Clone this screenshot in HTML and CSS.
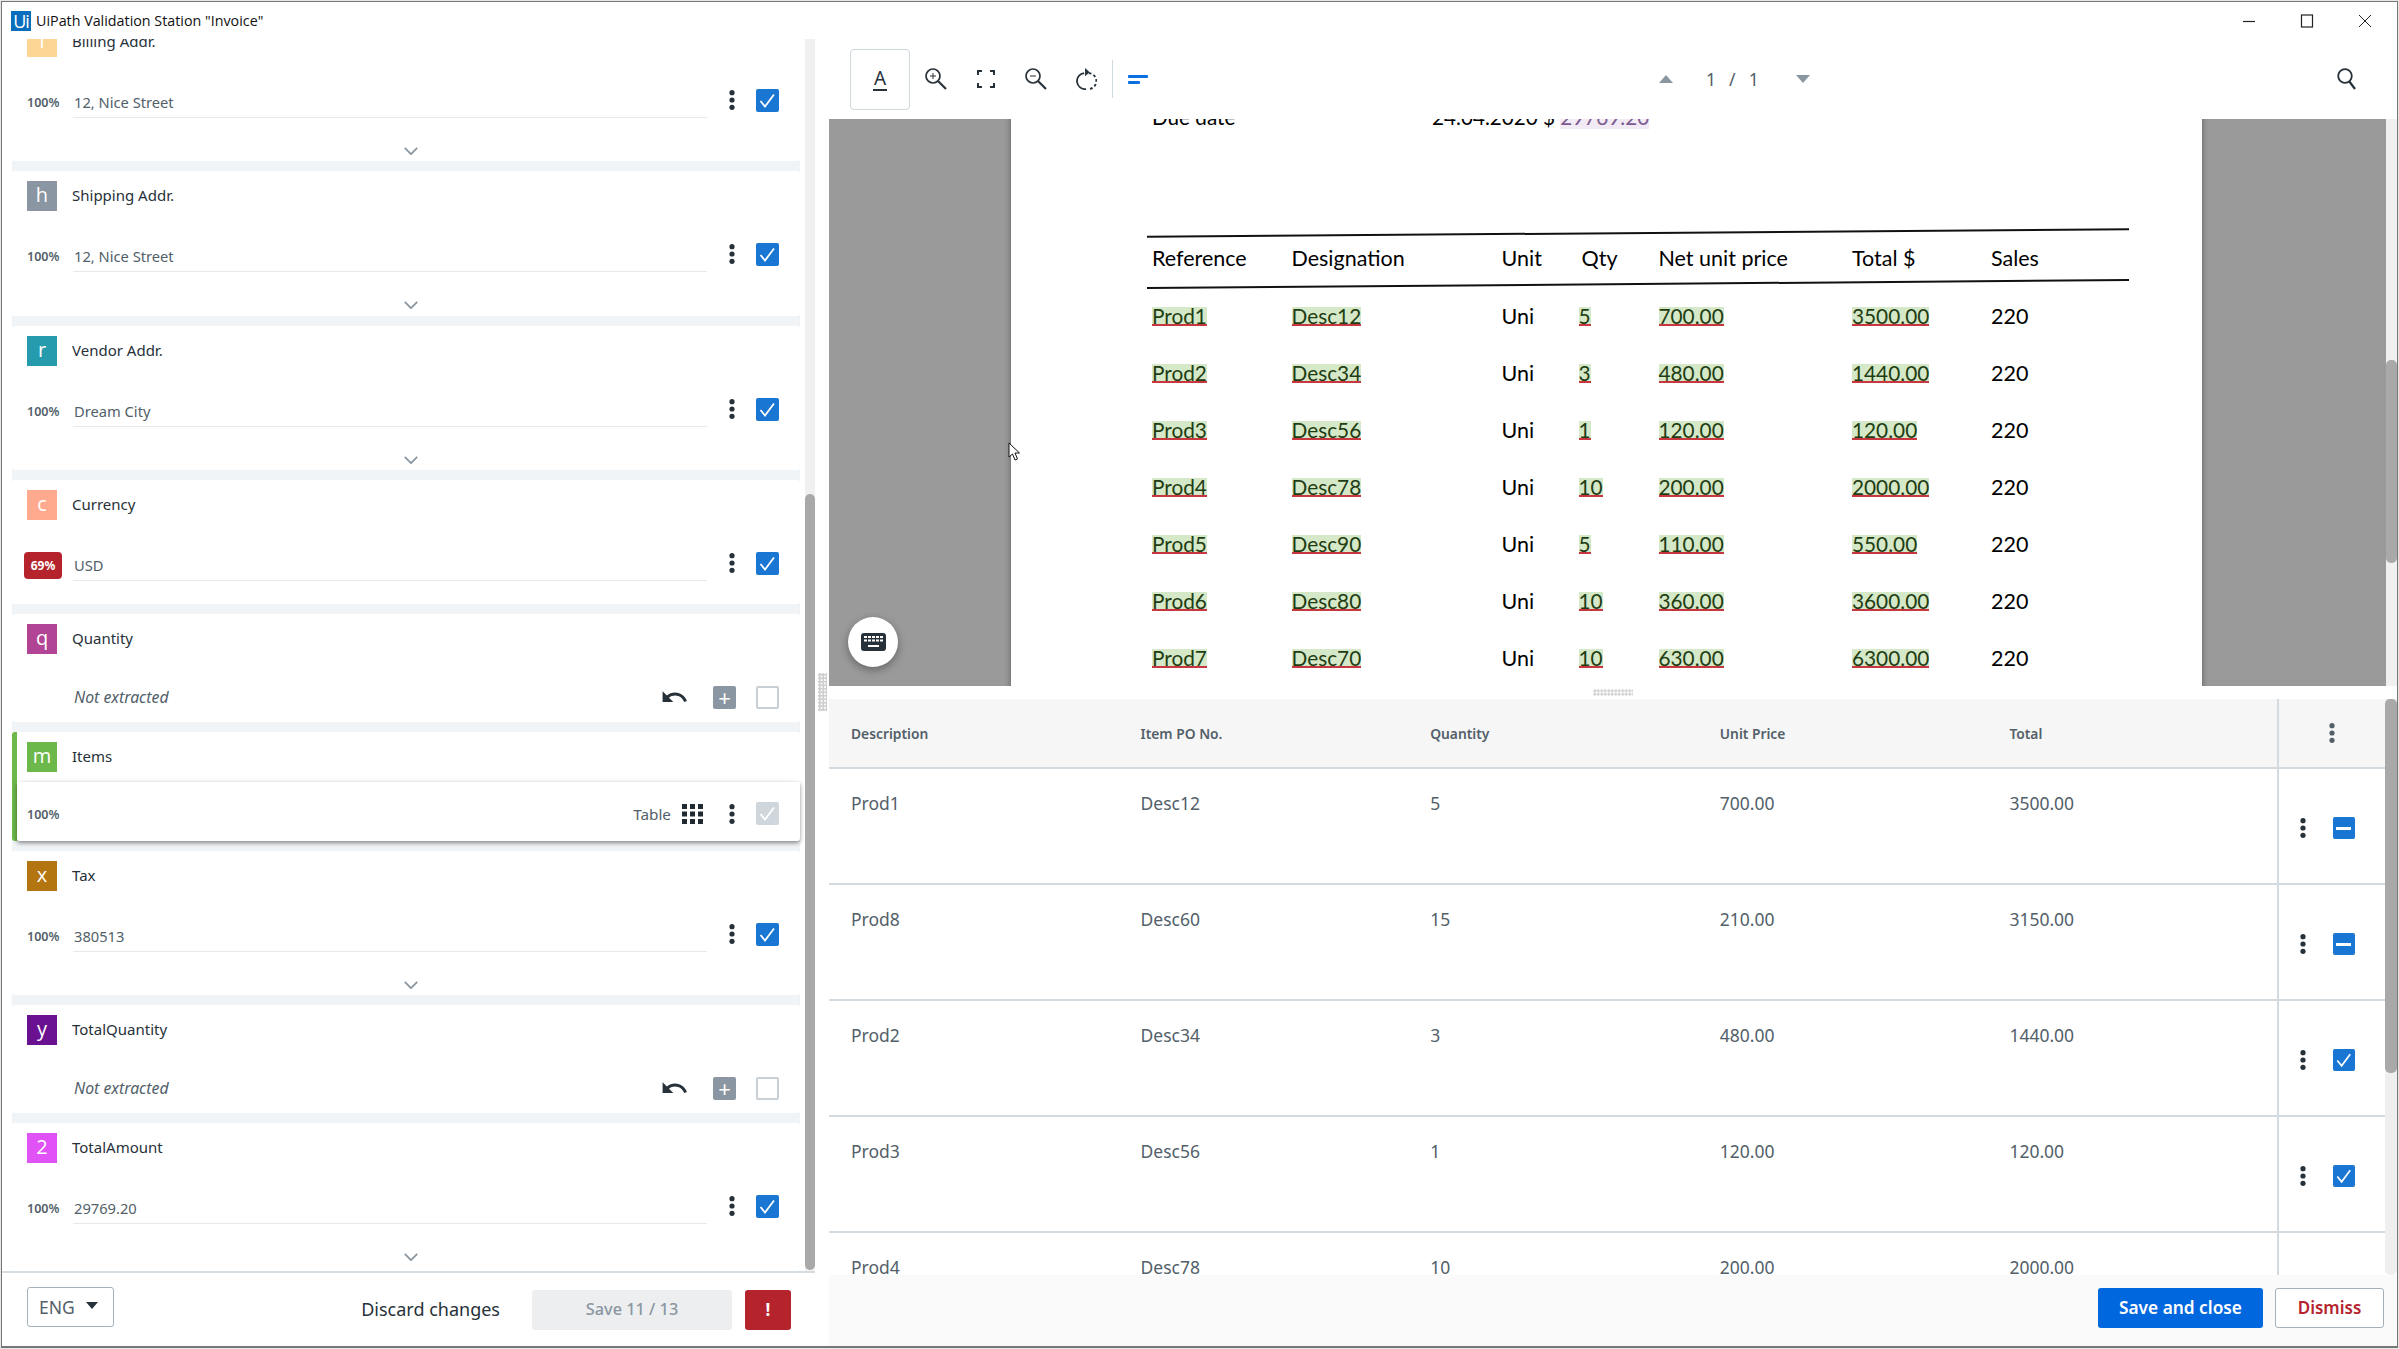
FILE: index.html
```html
<!DOCTYPE html>
<html lang="en">
<head>
<meta charset="utf-8">
<title>UiPath Validation Station</title>
<link rel="stylesheet" href="styles.css">
</head>
<body>
<svg class="sprite" width="0" height="0" aria-hidden="true">
  <symbol id="kebab" viewBox="0 0 6 20"><circle cx="3" cy="2.7" r="2.6"/><circle cx="3" cy="10" r="2.6"/><circle cx="3" cy="17.3" r="2.6"/></symbol>
  <symbol id="chev" viewBox="0 0 16 9"><path d="M1 1l7 7 7-7" fill="none" stroke="#8a96a1" stroke-width="2"/></symbol>
  <symbol id="tick" viewBox="0 0 23 23"><path d="M4.500 12l4.500 5.500L18 5.500" fill="none" stroke="#fff" stroke-width="1.800"/></symbol>
  <symbol id="undo" viewBox="1.500 7.500 21 9.500"><path d="M12.500 8c-2.650 0-5.050.99-6.900 2.600L2 7v9h9l-3.620-3.620c1.390-1.160 3.160-1.880 5.120-1.880 3.540 0 6.550 2.310 7.600 5.500l2.370-.78C21.080 11.030 17.150 8 12.500 8z"/></symbol>
</svg>
<div class="window">
  <header class="titlebar">
    <span class="logo">Ui</span>
    <span class="title">UiPath Validation Station "Invoice"</span>
    <div class="winctl">
      <svg class="wc" viewBox="0 0 14 14"><path d="M1 7.500h12" stroke="#222" stroke-width="1.200"/></svg>
      <svg class="wc" viewBox="0 0 14 14"><rect x="1.500" y="1" width="11" height="12" fill="none" stroke="#222" stroke-width="1.200"/></svg>
      <svg class="wc" viewBox="0 0 14 14"><path d="M1 1l12 12M13 1L1 13" stroke="#222" stroke-width="1"/></svg>
    </div>
  </header>
  <div class="main">
    <aside class="left">
      <div class="left-scroll">
        <div class="cards">
          <section class="card">
            <div class="card-head"><span class="badge b-i">i</span><span class="label">Billing Addr.</span></div>
            <div class="row"><span class="conf">100%</span><span class="value">12, Nice Street</span><svg class="kebab"><use href="#kebab"/></svg><span class="check on"><svg><use href="#tick"/></svg></span></div>
            <div class="chev-row"><svg class="chev"><use href="#chev"/></svg></div>
          </section>
          <section class="card">
            <div class="card-head"><span class="badge b-h">h</span><span class="label">Shipping Addr.</span></div>
            <div class="row"><span class="conf">100%</span><span class="value">12, Nice Street</span><svg class="kebab"><use href="#kebab"/></svg><span class="check on"><svg><use href="#tick"/></svg></span></div>
            <div class="chev-row"><svg class="chev"><use href="#chev"/></svg></div>
          </section>
          <section class="card">
            <div class="card-head"><span class="badge b-r">r</span><span class="label">Vendor Addr.</span></div>
            <div class="row"><span class="conf">100%</span><span class="value">Dream City</span><svg class="kebab"><use href="#kebab"/></svg><span class="check on"><svg><use href="#tick"/></svg></span></div>
            <div class="chev-row"><svg class="chev"><use href="#chev"/></svg></div>
          </section>
          <section class="card card-short">
            <div class="card-head"><span class="badge b-c">c</span><span class="label">Currency</span></div>
            <div class="row"><span class="conf"><span class="conf-low">69%</span></span><span class="value">USD</span><svg class="kebab"><use href="#kebab"/></svg><span class="check on"><svg><use href="#tick"/></svg></span></div>
          </section>
          <section class="card card-empty">
            <div class="card-head"><span class="badge b-q">q</span><span class="label">Quantity</span></div>
            <div class="row row-empty"><span class="not-ex">Not extracted</span><svg class="undo"><use href="#undo"/></svg><span class="plus">+</span><span class="check"></span></div>
          </section>
          <section class="card card-active">
            <div class="card-head"><span class="badge b-m">m</span><span class="label">Items</span></div>
            <div class="row-active"><span class="conf">100%</span><span class="table-label">Table</span>
              <svg class="grid-ic" viewBox="0 0 21 20"><path d="M0 0h5v5H0zM8 0h5v5H8zM16 0h5v5h-5zM0 7.500h5v5H0zM8 7.500h5v5H8zM16 7.500h5v5h-5zM0 15h5v5H0zM8 15h5v5H8zM16 15h5v5h-5z"/></svg>
              <svg class="kebab"><use href="#kebab"/></svg><span class="check off"><svg><use href="#tick"/></svg></span></div>
          </section>
          <section class="card">
            <div class="card-head"><span class="badge b-x">x</span><span class="label">Tax</span></div>
            <div class="row"><span class="conf">100%</span><span class="value">380513</span><svg class="kebab"><use href="#kebab"/></svg><span class="check on"><svg><use href="#tick"/></svg></span></div>
            <div class="chev-row"><svg class="chev"><use href="#chev"/></svg></div>
          </section>
          <section class="card card-empty">
            <div class="card-head"><span class="badge b-y">y</span><span class="label">TotalQuantity</span></div>
            <div class="row row-empty"><span class="not-ex">Not extracted</span><svg class="undo"><use href="#undo"/></svg><span class="plus">+</span><span class="check"></span></div>
          </section>
          <section class="card">
            <div class="card-head"><span class="badge b-2">2</span><span class="label">TotalAmount</span></div>
            <div class="row"><span class="conf">100%</span><span class="value">29769.20</span><svg class="kebab"><use href="#kebab"/></svg><span class="check on"><svg><use href="#tick"/></svg></span></div>
            <div class="chev-row"><svg class="chev"><use href="#chev"/></svg></div>
          </section>
        </div>
        <div class="sb sb-left"><div class="thumb"></div></div>
      </div>
      <footer class="left-foot">
        <div class="lang">ENG<span class="caret"></span></div>
        <span class="discard">Discard changes</span>
        <span class="save-btn">Save 11 / 13</span>
        <span class="err-btn">!</span>
      </footer>
    </aside>
    <div class="vsplit"><span class="dots"></span></div>
    <div class="right">
      <div class="toolbar">
        <span class="tool-a"><span class="a-glyph">A</span></span>
        <span class="tool"><svg viewBox="0 0 22 22"><circle cx="8" cy="8" r="7" fill="none" stroke="#273139" stroke-width="1.700"/><path d="M13 13l8 8" stroke="#273139" stroke-width="2.200"/><path d="M8 5v6M5 8h6" stroke="#273139"/></svg></span>
        <span class="tool"><svg viewBox="-2 -2 22 22"><path d="M5 1H1v4M13 1h4v4M1 13v4h4M17 13v4h-4" fill="none" stroke="#273139" stroke-width="2"/></svg></span>
        <span class="tool"><svg viewBox="0 0 22 22"><circle cx="8" cy="8" r="7" fill="none" stroke="#273139" stroke-width="1.700"/><path d="M13 13l8 8" stroke="#273139" stroke-width="2.200"/><path d="M5 8h6" stroke="#273139"/></svg></span>
        <span class="tool"><svg viewBox="0 0 22 24"><path d="M9 5.500a8.500 8.500 0 0 0 2 17.500" fill="none" stroke="#273139" stroke-width="2"/><path d="M14 5.500a8.500 8.500 0 0 1-1 17.500" fill="none" stroke="#273139" stroke-width="2" stroke-dasharray="3 2.500"/><path d="M10 0l5 4.500-5 4.500z" fill="#273139"/></svg></span>
        <span class="tool-sep"></span>
        <span class="tool-bars"><i class="bar1"></i><i class="bar2"></i></span>
        <div class="pager">
          <span class="tri-up"></span>
          <span class="pages">1 &nbsp;/ &nbsp;1</span>
          <span class="tri-down"></span>
        </div>
        <svg class="tool-search" viewBox="0 0 20 22"><circle cx="8" cy="8" r="6.800" fill="none" stroke="#273139" stroke-width="1.800"/><path d="M12 13l6 8" stroke="#273139" stroke-width="2.200"/></svg>
      </div>
      <div class="viewer">
        <div class="gutter gutter-left">
          <button class="kb-btn" aria-label="Keyboard"><svg viewBox="0 0 25 18"><rect width="25" height="18" rx="3" fill="#273139"/><path d="M3 3h3v2H3zM7 3h3v2H7zM11 3h3v2h-3zM15 3h3v2h-3zM19 3h3v2h-3zM3 6.500h3v2H3zM7 6.500h3v2H7zM11 6.500h3v2h-3zM15 6.500h3v2h-3zM19 6.500h3v2h-3zM7 12h11v2H7z" fill="#fff"/></svg></button>
        </div>
        <div class="page">
          <div class="due"><span class="due-l">Due date</span><span>24.04.2020 $ <span class="hl-p">29769.20</span></span></div>
          <div class="rule rule-1"></div>
          <div class="doc-row doc-head"><span>Reference</span><span>Designation</span><span>Unit</span><span class="qh">Qty</span><span>Net unit price</span><span>Total $</span><span>Sales</span></div>
          <div class="rule rule-2"></div>
          <div class="doc-row"><span><b class="hl">Prod1</b></span><span><b class="hl">Desc12</b></span><span>Uni</span><span><b class="hl">5</b></span><span><b class="hl">700.00</b></span><span><b class="hl">3500.00</b></span><span>220</span></div>
          <div class="doc-row"><span><b class="hl">Prod2</b></span><span><b class="hl">Desc34</b></span><span>Uni</span><span><b class="hl">3</b></span><span><b class="hl">480.00</b></span><span><b class="hl">1440.00</b></span><span>220</span></div>
          <div class="doc-row"><span><b class="hl">Prod3</b></span><span><b class="hl">Desc56</b></span><span>Uni</span><span><b class="hl">1</b></span><span><b class="hl">120.00</b></span><span><b class="hl">120.00</b></span><span>220</span></div>
          <div class="doc-row"><span><b class="hl">Prod4</b></span><span><b class="hl">Desc78</b></span><span>Uni</span><span><b class="hl">10</b></span><span><b class="hl">200.00</b></span><span><b class="hl">2000.00</b></span><span>220</span></div>
          <div class="doc-row"><span><b class="hl">Prod5</b></span><span><b class="hl">Desc90</b></span><span>Uni</span><span><b class="hl">5</b></span><span><b class="hl">110.00</b></span><span><b class="hl">550.00</b></span><span>220</span></div>
          <div class="doc-row"><span><b class="hl">Prod6</b></span><span><b class="hl">Desc80</b></span><span>Uni</span><span><b class="hl">10</b></span><span><b class="hl">360.00</b></span><span><b class="hl">3600.00</b></span><span>220</span></div>
          <div class="doc-row"><span><b class="hl">Prod7</b></span><span><b class="hl">Desc70</b></span><span>Uni</span><span><b class="hl">10</b></span><span><b class="hl">630.00</b></span><span><b class="hl">6300.00</b></span><span>220</span></div>
        </div>
        <div class="gutter gutter-right"></div>
        <div class="sb sb-doc"><div class="thumb"></div></div>
      </div>
      <div class="hsplit"><span class="dots-h"></span></div>
      <div class="table-wrap">
        <div class="table">
          <div class="t-head"><span>Description</span><span>Item PO No.</span><span>Quantity</span><span>Unit Price</span><span>Total</span><span class="t-act-h"><svg class="kebab kebab-h"><use href="#kebab"/></svg></span></div>
          <div class="t-row"><span>Prod1</span><span>Desc12</span><span>5</span><span>700.00</span><span>3500.00</span><span class="t-act"><svg class="kebab"><use href="#kebab"/></svg><span class="check sm on"><i class="dash"></i></span></span></div>
          <div class="t-row"><span>Prod8</span><span>Desc60</span><span>15</span><span>210.00</span><span>3150.00</span><span class="t-act"><svg class="kebab"><use href="#kebab"/></svg><span class="check sm on"><i class="dash"></i></span></span></div>
          <div class="t-row"><span>Prod2</span><span>Desc34</span><span>3</span><span>480.00</span><span>1440.00</span><span class="t-act"><svg class="kebab"><use href="#kebab"/></svg><span class="check sm on"><svg><use href="#tick"/></svg></span></span></div>
          <div class="t-row"><span>Prod3</span><span>Desc56</span><span>1</span><span>120.00</span><span>120.00</span><span class="t-act"><svg class="kebab"><use href="#kebab"/></svg><span class="check sm on"><svg><use href="#tick"/></svg></span></span></div>
          <div class="t-row"><span>Prod4</span><span>Desc78</span><span>10</span><span>200.00</span><span>2000.00</span><span class="t-act"></span></div>
        </div>
        <div class="sb sb-table"><div class="thumb"></div></div>
      </div>
      <footer class="right-foot">
        <span class="btn-primary">Save and close</span>
        <span class="btn-dismiss">Dismiss</span>
      </footer>
    </div>
  </div>
  <svg class="cursor" viewBox="0 0 13 20"><path d="M1 1v14l3.500-3 2.500 6 2.500-1-2.500-6H11.500z" fill="#fff" stroke="#111" stroke-width="1"/></svg>
</div>
</body>
</html>
```
FILE: styles.css
```css
* { box-sizing: border-box; }
html, body { margin: 0; padding: 0; height: 100%; overflow: hidden; }
body { background: #e6e6e6; font-family: "Noto Sans", "Open Sans", sans-serif; color: #273139; }
.sprite { position: absolute; }
.window { position: relative; width: 2397px; height: 1347px; border: 1px solid #777; border-bottom-width: 2px; margin-top: 1px; margin-left: 1px; background: #fff; display: flex; flex-direction: column; overflow: hidden; }

/* title bar */
.titlebar { height: 37px; flex: none; display: flex; align-items: center; padding-left: 9px; background: #fff; }
.logo { width: 20px; height: 20px; background: #0a6ebd; color: #fff; font: 18px/20px "Open Sans", sans-serif; letter-spacing: -1px; text-align: center; }
.title { margin-left: 5px; font: 14.300px "Open Sans", sans-serif; color: #111; }
.winctl { margin-left: auto; display: flex; gap: 44px; margin-right: 25px; }
.wc { width: 14px; height: 14px; }

.main { flex: 1; display: flex; min-height: 0; }

/* left panel */
.left { width: 813px; flex: none; display: flex; flex-direction: column; }
.left-scroll { flex: 1; display: flex; min-height: 0; overflow: hidden; padding-left: 10px; }
.cards { width: 788px; margin-top: -22.500px; margin-right: 5px; background: #f1f4f7; display: flex; flex-direction: column; gap: 10px; align-self: flex-start; }
.card { background: #fff; border-radius: 3px; padding: 10px 21px 0 15px; }
.card-head { height: 30px; display: flex; align-items: center; gap: 15px; }
.badge { width: 30px; height: 30px; flex: none; color: #fff; font-size: 20px; line-height: 28px; text-align: center; font-family: "Open Sans", sans-serif; }
.b-i { background: #fdd594; }
.b-h { background: #8a96a1; }
.b-r { background: #259bad; }
.b-c { background: #ffa98f; }
.b-q { background: #b14494; }
.b-m { background: #6db84b; }
.b-x { background: #b27510; }
.b-y { background: #6a1191; }
.b-2 { background: #e052f5; }
.label { font-size: 15px; line-height: 20px; color: #273139; margin-top: -2px; }
.row { display: flex; align-items: flex-start; margin-top: 32px; height: 29px; }
.conf { width: 46px; flex: none; font-size: 12.500px; font-weight: 600; line-height: 27px; color: #526069; }
.conf-low { display: inline-block; margin-left: -3px; width: 38px; height: 27px; border-radius: 4px; background: #b5232d; color: #fff; font-size: 12px; font-weight: 700; line-height: 27px; text-align: center; vertical-align: top; }
.value { flex: 1; height: 29px; border-bottom: 1px solid #e4e9ed; font-size: 14.700px; line-height: 26px; color: #526069; padding-left: 1px; }
.kebab { width: 6px; height: 20px; margin: 1px 21px 0 22px; fill: #273139; flex: none; }
.check { width: 23px; height: 23px; flex: none; border-radius: 2px; border: 2px solid #c8d0d6; display: flex; align-items: center; justify-content: center; }
.check svg { width: 23px; height: 23px; flex: none; }
.check.on { background: #1976d2; border: 0; }
.check.off { background: #cfd6dc; border: 0; }
.chev-row { display: flex; justify-content: center; margin-top: 29px; padding: 0 0 6.500px 10px; height: 14.500px; margin-left: -15px; margin-right: -21px; }
.chev { width: 16px; height: 8px; }
.card-short { padding-bottom: 23px; }
.card-empty { padding-bottom: 12.500px; }
.row-empty { margin-top: 32px; height: 23px; align-items: center; }
.not-ex { flex: 1; margin-left: 47px; font-size: 15.800px; font-style: italic; color: #526069; margin-top: -2px; }
.undo { width: 25px; height: 13px; fill: #273139; margin-right: 26px; }
.plus { width: 23px; height: 23px; background: #8a96a1; border-radius: 2px; color: #fff; font-size: 22px; line-height: 22px; text-align: center; margin-right: 20px; }
.card-active { border-left: 5px solid #6db84b; padding-left: 10px; padding-bottom: 0; }
.row-active { margin: 10px -21px 0 -10px; padding: 6px 21px 0 10px; height: 59px; background: #fff; display: flex; align-items: center; border-radius: 0 0 3px 3px; box-shadow: 0 2px 4px rgba(0,0,0,.45), 0 -6px 8px -6px rgba(0,0,0,.06); }
.table-label { margin-left: auto; font-size: 15.300px; color: #526069; }
.grid-ic { width: 21px; height: 20px; margin-left: 11px; fill: #1f2a33; }
.row-active .kebab { margin: 0 21px 0 26px; }
.row-active .check { margin-top: -2px; }
.sb { flex: none; background: #f0f0f0; }
.thumb { background: #a9a9a9; border-radius: 5px; }
.sb-left { width: 10px; padding-top: 455px; }
.sb-left .thumb { height: 776px; }
.left-foot { height: 75px; flex: none; border-top: 2px solid #d6dde2; display: flex; align-items: center; padding: 0 24px 0 25px; background: #fff; }
.lang { width: 87px; height: 40px; margin-top: -6px; border: 1px solid #a4b1ba; border-radius: 3px; display: flex; align-items: center; padding-left: 11px; font-size: 17.500px; color: #526069; gap: 11px; }
.caret { border: 6.500px solid transparent; border-top: 7px solid #273139; border-bottom: 0; margin-top: -2px; }
.discard { margin-left: auto; font-size: 18px; color: #273139; margin-top: -2px; }
.save-btn { width: 200px; height: 40px; margin-left: 32px; background: #eceef0; border-radius: 3px; color: #8a96a1; font-size: 16.300px; font-weight: 500; line-height: 39px; text-align: center; }
.err-btn { width: 46px; height: 40px; margin-left: 13px; background: #b5232d; border-radius: 3px; color: #fff; font-size: 17px; font-weight: 700; line-height: 40px; text-align: center; }

.vsplit { width: 14px; flex: none; display: flex; align-items: flex-start; padding-top: 634px; justify-content: flex-end; padding-right: 2px; }
.dots { width: 9px; height: 38px; background-image: radial-gradient(circle, #cfcfcf 1.400px, transparent 1.600px); background-size: 3.500px 3.500px; }

/* right */
.right { flex: 1; min-width: 0; display: flex; flex-direction: column; }
.toolbar { height: 80px; flex: none; display: flex; align-items: center; padding-left: 21px; }
.tool-a { width: 60px; height: 61px; border: 1px solid #cfd8dd; border-radius: 4px; display: flex; align-items: center; justify-content: center; margin-right: 1px; }
.a-glyph { font-size: 19px; line-height: 21px; border-bottom: 2.500px solid #273139; padding: 0 1px; color: #273139; }
.tool { width: 50px; height: 50px; display: flex; align-items: center; justify-content: center; flex: none; }
.tool svg { width: 22px; height: 22px; }
.tool-sep { width: 1px; height: 38px; margin-left: 1px; background: #cfd8dd; }
.tool-bars { width: 20px; margin-left: 15px; display: flex; flex-direction: column; gap: 3px; }
.tool-bars i { display: block; height: 3px; background: #0a6fe0; border-radius: 1px; }
.bar1 { width: 20px; }
.bar2 { width: 12px; }
.pager { display: flex; align-items: center; margin-left: 511px; }
.tri-up { border: 7px solid transparent; border-bottom: 8px solid #8a96a1; border-top: 0; }
.pages { margin-left: 33px; width: 64px; font-size: 17.500px; color: #526069; white-space: nowrap; word-spacing: 2px; }
.tri-down { margin-left: 26px; border: 7px solid transparent; border-top: 8px solid #8a96a1; border-bottom: 0; }
.tool-search { width: 20px; height: 22px; margin-left: auto; margin-right: 40px; }

.viewer { height: 567px; flex: none; display: flex; }
.gutter { background: #999a99; flex: none; }
.gutter-left { width: 182px; position: relative; box-shadow: inset -6px 0 6px -6px rgba(0,0,0,.4); }
.gutter-right { width: 184px; box-shadow: inset 6px 0 6px -6px rgba(0,0,0,.4); }
.kb-btn { position: absolute; left: 19px; top: 498px; width: 50px; height: 50px; border: 0; border-radius: 50%; background: #fff; box-shadow: 0 3px 8px rgba(0,0,0,.35); padding: 0; display: flex; align-items: center; justify-content: center; }
.kb-btn svg { width: 25px; height: 18px; }
.page { flex: 1; min-width: 0; overflow: hidden; background: #fff; font-family: Lato, sans-serif; font-size: 21.500px; color: #000; padding-left: 136px; }
.due { height: 26px; margin-top: -15px; line-height: 26px; display: flex; padding-left: 5px; font-size: 20.700px; }
.due-l { width: 280px; }
.hl-p { background: #f2eaf5; color: #7b5a8f; }
.rule { width: 982px; height: 2px; background: #111; transform-origin: center; }
.rule-1 { margin-top: 102px; transform: rotate(-0.44deg); }
.rule-2 { transform: rotate(-0.46deg); }
.doc-row { display: grid; grid-template-columns: 139.500px 210px 77px 80px 193.500px 139px auto; height: 57px; align-items: center; padding-left: 5px; line-height: 19px; }
.doc-head { height: 49px; }
.doc-head + .rule + .doc-row { margin-top: 3px; }
.qh { padding-left: 3px; }
.hl { display: inline-block; font-weight: 400; font-size: 20.800px; background: #d5e8c8; color: #1f3d13; border-bottom: 2.500px solid #c8363f; line-height: 17px; height: 19.500px; }
.sb-doc { width: 11px; padding-top: 241px; }
.sb-doc .thumb { height: 203px; }

.hsplit { height: 13px; flex: none; display: flex; justify-content: center; }
.dots-h { width: 40px; height: 7px; margin-top: 3px; margin-left: 0; background-image: radial-gradient(circle, #cfcfcf 1.300px, transparent 1.500px); background-size: 3.500px 3.500px; }

.table-wrap { flex: 1; display: flex; min-height: 0; overflow: hidden; }
.table { flex: 1; min-width: 0; align-self: flex-start; }
.t-head, .t-row { display: grid; grid-template-columns: repeat(5, 289.600px) 1fr; }
.t-head { height: 70px; background: #f6f6f6; border-bottom: 2px solid #d3dae0; align-items: center; font-size: 13.800px; font-weight: 600; color: #526069; padding-bottom: 2px; }
.t-head > span { padding-left: 22px; }
.t-row { height: 116px; border-bottom: 2px solid #d3dae0; font-size: 17.500px; color: #526069; }
.t-row > span { padding: 22px 0 0 22px; line-height: 24px; }
.t-head > .t-act-h { height: 70px; margin-bottom: -2px; border-left: 2px solid #d3dae0; display: flex; align-items: center; padding: 0 0 2px 0; }
.kebab-h { fill: #526069; margin: 0 0 0 50px; }
.t-row > .t-act { border-left: 2px solid #d3dae0; padding: 48px 0 0 0; display: flex; align-items: flex-start; }
.t-act .kebab { margin: 1px 0 0 21px; }
.check.sm { margin-left: 27px; width: 22px; height: 22px; }
.check.sm svg { width: 22px; height: 22px; }
.dash { display: block; width: 15px; height: 3px; background: #fff; }
.sb-table { width: 12px; background: #efefef; border-radius: 0 0 5px 5px; }
.sb-table .thumb { height: 374px; }
.right-foot { height: 71px; flex: none; background: #fafafa; display: flex; align-items: flex-start; justify-content: flex-end; padding: 13px 13px 0 0; gap: 12px; }
.btn-primary { width: 165px; height: 40px; background: #0067df; border-radius: 3px; color: #fff; font-size: 17.300px; font-weight: 600; line-height: 39px; text-align: center; }
.btn-dismiss { width: 109px; height: 40px; background: #fff; border: 1px solid #a4b1ba; border-radius: 3px; color: #b5232d; font-size: 17px; font-weight: 600; line-height: 37px; text-align: center; }
.cursor { position: absolute; left: 1006px; top: 440px; width: 13px; height: 20px; }
```
